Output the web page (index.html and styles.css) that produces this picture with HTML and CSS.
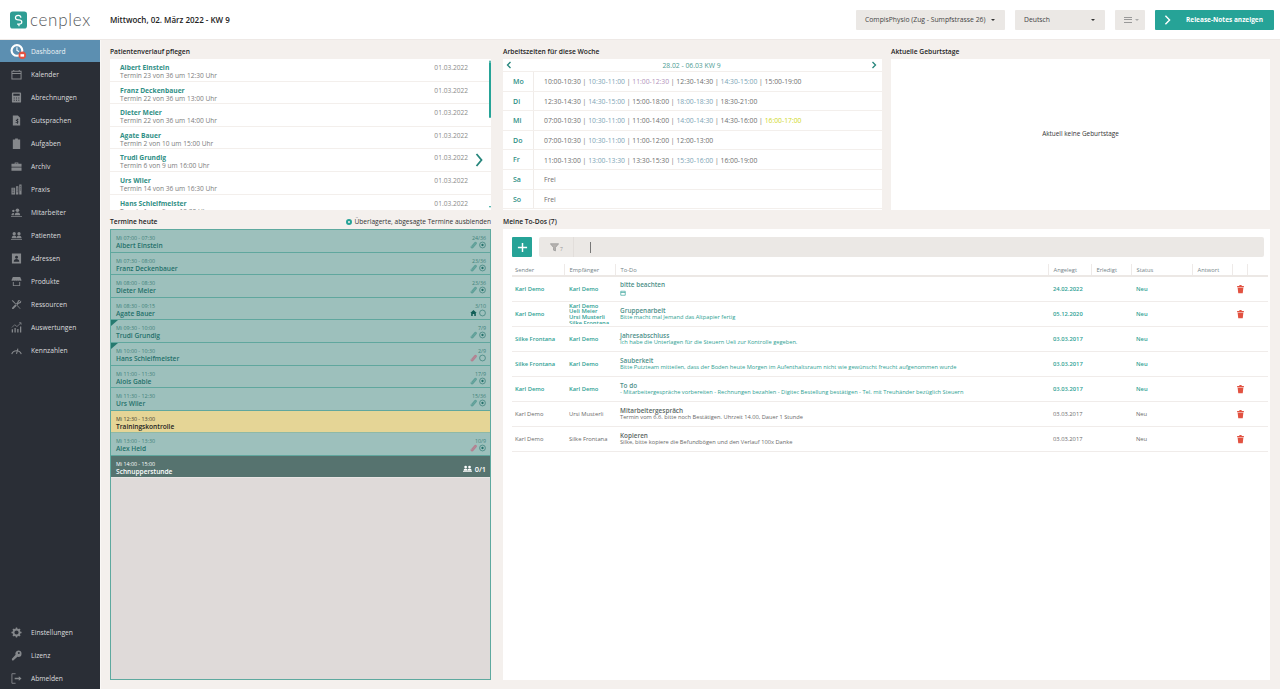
FILE: index.html
```html
<!DOCTYPE html>
<html>
<head>
<meta charset="utf-8">
<title>Cenplex Dashboard</title>
<link rel="stylesheet" href="styles.css">
</head>
<body>

<svg class="iconDefs" width="0" height="0">
	<symbol id="iCal" viewBox="0 0 12 12"><path d="M1 2.500h10v8.500H1zM3 1v2M9 1v2M1 5h10" fill="none" stroke="currentColor" stroke-width="1.100"/></symbol>
	<symbol id="iCalc" viewBox="0 0 12 12"><path d="M2 .5h8a1 1 0 0 1 1 1v9a1 1 0 0 1-1 1H2a1 1 0 0 1-1-1v-9a1 1 0 0 1 1-1zM2.500 2v2h7V2zM3 6v1h1V6zm2.500 0v1h1V6zM8 6v1h1V6zM3 8.500v1h1v-1zm2.500 0v1h1v-1zm2.500 0v1h1v-1z" fill="currentColor" fill-rule="evenodd"/></symbol>
	<symbol id="iDoc" viewBox="0 0 12 12"><path d="M2 .5h5.500L10 3v8.500H2zM6.500 4v1.200H5.300v1.300H6.500v1H5v1h1.500v1h1v-1c.8-.3.8-1.700 0-2H7.300v-1H8v-1h-.5V4z" fill="currentColor" fill-rule="evenodd"/></symbol>
	<symbol id="iClip" viewBox="0 0 12 12"><path d="M2 1.500h2.500V.5h3v1H10v10.500H2z" fill="currentColor"/></symbol>
	<symbol id="iCase" viewBox="0 0 12 12"><path d="M4 3V1.500h4V3h3.500v7.500H.5V3zm1 0h2v-.6H5zM.5 6.200h11v.8H.5z" fill="currentColor" fill-rule="evenodd"/></symbol>
	<symbol id="iHouse" viewBox="0 0 12 12"><path d="M.5 4h4v7.500h-4zM5.500 2.500h2.500v9H5.500zM9 .5h2.500v11H9z" fill="currentColor"/><path d="M1.500 5.500h2M1.500 7.500h2M1.500 9.500h2M6.200 4.500h1.200M6.200 6.500h1.200M6.200 8.500h1.200M9.700 2.500h1.200M9.700 4.500h1.200M9.700 6.500h1.200" stroke="#2a2e36" stroke-width=".7"/></symbol>
	<symbol id="iStaff" viewBox="0 0 12 12"><circle cx="7" cy="3.500" r="2" fill="currentColor"/><path d="M4 9c0-2 1-3 3-3s3 1 3 3zM2.500 5.500a1.300 1.300 0 1 1 .1 0zM.5 9c0-1.500.7-2.500 2-2.500l.7.100L3 9zM0 10h12v.8H0z" fill="currentColor"/></symbol>
	<symbol id="iPeople" viewBox="0 0 12 12"><circle cx="3.500" cy="4" r="1.800" fill="currentColor"/><circle cx="8.700" cy="4" r="1.800" fill="currentColor"/><path d="M.8 9c0-1.800 1-3 2.700-3s2.500 1.200 2.500 3zM6.200 9c0-1.800.8-3 2.500-3s2.800 1.200 2.800 3zM0 9.800h12v.8H0z" fill="currentColor"/></symbol>
	<symbol id="iBox" viewBox="0 0 12 12"><path d="M1 .5h10v11H1zM6 3a1.600 1.600 0 1 0 .1 0zM3 9.500h6c0-2-1-3-3-3s-3 1-3 3z" fill="currentColor" fill-rule="evenodd"/></symbol>
	<symbol id="iShop" viewBox="0 0 12 12"><path d="M2 1h8l1.500 3.500c0 1-2 1-2 0 0 1-2.300 1-2.300 0 0 1-2.400 1-2.400 0 0 1-2.300 1-2.300 0 0 1-2 1-2 0zM2 6.500h1V10h6V6.500h1V11H2z" fill="currentColor"/></symbol>
	<symbol id="iTools" viewBox="0 0 12 12"><path d="M1 1l1.500 1L10.500 10.500 10 11 2 3 1 2zM11 1.500L8.500 4 8 3.500 10 1.200C8.500.5 7 1.500 7.200 3.200L1.200 9.500c-.5 1 .5 2 1.400 1.300L8.700 4.800C10.500 5 11.500 3.500 11 1.500z" fill="currentColor"/></symbol>
	<symbol id="iChart" viewBox="0 0 12 12"><path d="M.8 8h1.400v3.500H.8zM3.800 6.500h1.400v5H3.800zM6.800 7.500h1.400v4H6.800zM9.800 5h1.400v6.500H9.800z" fill="currentColor"/><path d="M1 6l3-3 2.500 2L11 .8M8.800.8H11V3" fill="none" stroke="currentColor" stroke-width=".8"/></symbol>
	<symbol id="iGauge" viewBox="0 0 12 12"><path d="M.8 10A5.500 5.500 0 0 1 11.200 10M6 9.800L7.500 4" fill="none" stroke="currentColor" stroke-width="1.200"/></symbol>
	<symbol id="iGear" viewBox="0 0 12 12"><circle cx="6" cy="6" r="3.300" fill="none" stroke="currentColor" stroke-width="2"/><path d="M6 .5v2M6 9.500v2M.5 6h2M9.500 6h2M2.100 2.100l1.400 1.400M8.500 8.500l1.400 1.400M9.900 2.100L8.500 3.500M3.500 8.500l-1.400 1.400" stroke="currentColor" stroke-width="1.500"/></symbol>
	<symbol id="iKey" viewBox="0 0 12 12"><path d="M8 .5a3.500 3.500 0 0 1 0 7 3.500 3.500 0 0 1-1-.2L2.500 11.500h-1l-.5-.5v-1.500L5 5.300A3.500 3.500 0 0 1 8 .5zm.5 1.700a1 1 0 1 0 .1 0z" fill="currentColor" fill-rule="evenodd"/></symbol>
	<symbol id="iExit" viewBox="0 0 12 12"><path d="M5 .8H1v10.400h4" fill="none" stroke="currentColor" stroke-width="1"/><path d="M4 5.300h4.500V3.500L11.500 6l-3 2.500V6.700H4z" fill="currentColor"/></symbol>
	<symbol id="iPaper" viewBox="0 0 12 12"><path d="M3 8.500L8.200 2.300c1-1.200 3-.2 2.200 1.400L5 10c-1.200 1.500-3.500.5-2.800-1.500" fill="none" stroke="currentColor" stroke-width="2.400"/></symbol>
	<symbol id="iDot" viewBox="0 0 12 12"><circle cx="6" cy="6" r="5" fill="none" stroke="currentColor" stroke-width="1"/><circle cx="6" cy="6" r="2" fill="currentColor"/></symbol>
	<symbol id="iRing" viewBox="0 0 12 12"><circle cx="6" cy="6" r="5" fill="none" stroke="currentColor" stroke-width="1"/></symbol>
	<symbol id="iHome" viewBox="0 0 12 12"><path d="M6 1l5.500 5H10v5H7.300V7.500H4.700V11H2V6H.5z" fill="currentColor"/></symbol>
	<symbol id="iTrash" viewBox="0 0 12 12"><path d="M1.500 2h3V.8h3V2h3v1.500h-9zM2.200 4.300h7.600L9 11.500H3z" fill="currentColor"/></symbol>
</svg>

<div class="topBar">
	<div class="logoBox">
		<svg class="logoMark" viewBox="0 0 18 18"><rect width="18" height="18" rx="3" fill="#2f9d94"/><path d="M11.500 6.500C11.500 4.800 10.300 4 8.800 4 7 4 5.800 5 5.800 6.500S7 8.800 8.800 8.800 12.500 9.500 12.500 11 11 13.300 9.300 13.300H7.500M9.500 13v2.500" fill="none" stroke="#fff" stroke-width="1.300"/></svg>
		<span class="logoText">cenplex</span>
	</div>
	<div class="dateText">Mittwoch, 02. März 2022 - KW 9</div>
	<div class="topActions">
		<div class="selectBox selectPractice">CompisPhysio (Zug - Sumpfstrasse 26)<span class="caret"></span></div>
		<div class="selectBox selectLang">Deutsch<span class="caret"></span></div>
		<div class="selectBox selectMenu"><span class="burger"></span><span class="caret caretLight"></span></div>
		<div class="releaseBtn">
			<svg class="releaseArrow" viewBox="0 0 8 12"><path d="M1.500 1l5 5-5 5" fill="none" stroke="#fff" stroke-width="1.700"/></svg>
			<span>Release-Notes anzeigen</span>
		</div>
	</div>
</div>

<div class="pageBody">

	<div class="sideBar">
		<div class="navItem navActive">
			<svg class="navIcon dashIcon" viewBox="0 0 14 14"><circle cx="6" cy="6" r="5" fill="none" stroke="#fff" stroke-width="2"/><path d="M6 3v3l2 1" fill="none" stroke="#fff" stroke-width="1"/><circle cx="11" cy="10.500" r="3.500" fill="#e25241"/><rect x="9.300" y="9.500" width="3.400" height="2.300" fill="#fff"/></svg>
			Dashboard
		</div>
		<div class="navItem"><svg class="navIcon"><use href="#iCal"/></svg>Kalender</div>
		<div class="navItem"><svg class="navIcon"><use href="#iCalc"/></svg>Abrechnungen</div>
		<div class="navItem"><svg class="navIcon"><use href="#iDoc"/></svg>Gutsprachen</div>
		<div class="navItem"><svg class="navIcon"><use href="#iClip"/></svg>Aufgaben</div>
		<div class="navItem"><svg class="navIcon"><use href="#iCase"/></svg>Archiv</div>
		<div class="navItem"><svg class="navIcon"><use href="#iHouse"/></svg>Praxis</div>
		<div class="navItem"><svg class="navIcon"><use href="#iStaff"/></svg>Mitarbeiter</div>
		<div class="navItem"><svg class="navIcon"><use href="#iPeople"/></svg>Patienten</div>
		<div class="navItem"><svg class="navIcon"><use href="#iBox"/></svg>Adressen</div>
		<div class="navItem"><svg class="navIcon"><use href="#iShop"/></svg>Produkte</div>
		<div class="navItem"><svg class="navIcon"><use href="#iTools"/></svg>Ressourcen</div>
		<div class="navItem"><svg class="navIcon"><use href="#iChart"/></svg>Auswertungen</div>
		<div class="navItem"><svg class="navIcon"><use href="#iGauge"/></svg>Kennzahlen</div>
		<div class="navSpacer"></div>
		<div class="navItem"><svg class="navIcon"><use href="#iGear"/></svg>Einstellungen</div>
		<div class="navItem"><svg class="navIcon"><use href="#iKey"/></svg>Lizenz</div>
		<div class="navItem"><svg class="navIcon"><use href="#iExit"/></svg>Abmelden</div>
	</div>

	<div class="mainArea">

		<div class="topRow">
			<div class="panelCol colLeft">
				<div class="panelTitle">Patientenverlauf pflegen</div>
				<div class="panelBox historyBox">
					<div class="historyRow"><div><div class="histName">Albert Einstein</div><div class="histSub">Termin 23 von 36 um 12:30 Uhr</div></div><div class="histDate">01.03.2022</div></div>
					<div class="historyRow"><div><div class="histName">Franz Deckenbauer</div><div class="histSub">Termin 22 von 36 um 13:00 Uhr</div></div><div class="histDate">01.03.2022</div></div>
					<div class="historyRow"><div><div class="histName">Dieter Meier</div><div class="histSub">Termin 22 von 36 um 14:00 Uhr</div></div><div class="histDate">01.03.2022</div></div>
					<div class="historyRow"><div><div class="histName">Agate Bauer</div><div class="histSub">Termin 2 von 10 um 15:00 Uhr</div></div><div class="histDate">01.03.2022</div></div>
					<div class="historyRow"><div><div class="histName">Trudi Grundig</div><div class="histSub">Termin 6 von 9 um 16:00 Uhr</div></div><div class="histDate">01.03.2022</div></div>
					<div class="historyRow"><div><div class="histName">Urs Wiler</div><div class="histSub">Termin 14 von 36 um 16:30 Uhr</div></div><div class="histDate">01.03.2022</div></div>
					<div class="historyRow"><div><div class="histName">Hans Schleifmeister</div><div class="histSub">Termin 1 von 9 um 18:30 Uhr</div></div><div class="histDate">01.03.2022</div></div>
					<svg class="histChevron" viewBox="0 0 8 14"><path d="M1.500 1l5 6-5 6" fill="none" stroke="#25857b" stroke-width="1.800"/></svg>
					<div class="scrollThumb"></div>
					<div class="scrollUp"></div>
					<div class="scrollDown"></div>
				</div>
			</div>

			<div class="panelCol colMid">
				<div class="panelTitle">Arbeitszeiten für diese Woche</div>
				<div class="panelBox weekBox">
					<div class="weekHead">
						<svg class="weekArrow" viewBox="0 0 6 8"><path d="M4.500 1L1.500 4l3 3" fill="none" stroke="#25857b" stroke-width="1.300"/></svg>
						<span>28.02 - 06.03 KW 9</span>
						<svg class="weekArrow" viewBox="0 0 6 8"><path d="M1.500 1l3 3-3 3" fill="none" stroke="#25857b" stroke-width="1.300"/></svg>
					</div>
					<div class="weekRow"><div class="weekDay">Mo</div><div class="weekTimes">10:00-10:30 | <span class="tBlue">10:30-11:00</span> | <span class="tPurple">11:00-12:30</span> | 12:30-14:30 | <span class="tBlue">14:30-15:00</span> | 15:00-19:00</div></div>
					<div class="weekRow"><div class="weekDay">Di</div><div class="weekTimes">12:30-14:30 | <span class="tBlue">14:30-15:00</span> | 15:00-18:00 | <span class="tBlue">18:00-18:30</span> | 18:30-21:00</div></div>
					<div class="weekRow"><div class="weekDay">Mi</div><div class="weekTimes">07:00-10:30 | <span class="tBlue">10:30-11:00</span> | 11:00-14:00 | <span class="tBlue">14:00-14:30</span> | 14:30-16:00 | <span class="tYellow">16:00-17:00</span></div></div>
					<div class="weekRow"><div class="weekDay">Do</div><div class="weekTimes">07:00-10:30 | <span class="tBlue">10:30-11:00</span> | 11:00-12:00 | 12:00-13:00</div></div>
					<div class="weekRow"><div class="weekDay">Fr</div><div class="weekTimes">11:00-13:00 | <span class="tBlue">13:00-13:30</span> | 13:30-15:30 | <span class="tBlue">15:30-16:00</span> | 16:00-19:00</div></div>
					<div class="weekRow"><div class="weekDay">Sa</div><div class="weekTimes">Frei</div></div>
					<div class="weekRow"><div class="weekDay">So</div><div class="weekTimes">Frei</div></div>
				</div>
			</div>

			<div class="panelCol colRight">
				<div class="panelTitle">Aktuelle Geburtstage</div>
				<div class="panelBox birthdayBox">Aktuell keine Geburtstage</div>
			</div>
		</div>

		<div class="bottomRow">
			<div class="panelCol colLeft">
				<div class="panelTitle titleSplit">
					<span>Termine heute</span>
					<span class="hideToggle"><span class="toggleDot"></span>Überlagerte, abgesagte Termine ausblenden</span>
				</div>
				<div class="apptBox">
					<div class="appt"><div><div class="apptTime">Mi 07:00 - 07:30</div><div class="apptName">Albert Einstein</div></div><div class="apptMeta"><div class="apptCount">24/36</div><div class="apptIcons"><svg class="clipGreen"><use href="#iPaper"/></svg><svg><use href="#iDot"/></svg></div></div></div>
					<div class="appt"><div><div class="apptTime">Mi 07:30 - 08:00</div><div class="apptName">Franz Deckenbauer</div></div><div class="apptMeta"><div class="apptCount">23/36</div><div class="apptIcons"><svg class="clipGreen"><use href="#iPaper"/></svg><svg><use href="#iDot"/></svg></div></div></div>
					<div class="appt"><div><div class="apptTime">Mi 08:00 - 08:30</div><div class="apptName">Dieter Meier</div></div><div class="apptMeta"><div class="apptCount">23/36</div><div class="apptIcons"><svg class="clipGreen"><use href="#iPaper"/></svg><svg><use href="#iDot"/></svg></div></div></div>
					<div class="appt"><div><div class="apptTime">Mi 08:30 - 09:15</div><div class="apptName">Agate Bauer</div></div><div class="apptMeta"><div class="apptCount">3/10</div><div class="apptIcons"><svg class="homeDark"><use href="#iHome"/></svg><svg><use href="#iRing"/></svg></div></div></div>
					<div class="appt apptFlag"><div><div class="apptTime">Mi 09:30 - 10:00</div><div class="apptName">Trudi Grundig</div></div><div class="apptMeta"><div class="apptCount">7/9</div><div class="apptIcons"><svg class="clipGreen"><use href="#iPaper"/></svg><svg><use href="#iDot"/></svg></div></div></div>
					<div class="appt apptFlag"><div><div class="apptTime">Mi 10:00 - 10:30</div><div class="apptName">Hans Schleifmeister</div></div><div class="apptMeta"><div class="apptCount">2/9</div><div class="apptIcons"><svg class="clipPink"><use href="#iPaper"/></svg><svg><use href="#iRing"/></svg></div></div></div>
					<div class="appt"><div><div class="apptTime">Mi 11:00 - 11:30</div><div class="apptName">Alois Gable</div></div><div class="apptMeta"><div class="apptCount">17/9</div><div class="apptIcons"><svg class="clipGreen"><use href="#iPaper"/></svg><svg><use href="#iDot"/></svg></div></div></div>
					<div class="appt"><div><div class="apptTime">Mi 11:30 - 12:30</div><div class="apptName">Urs Wiler</div></div><div class="apptMeta"><div class="apptCount">15/36</div><div class="apptIcons"><svg class="clipGreen"><use href="#iPaper"/></svg><svg><use href="#iDot"/></svg></div></div></div>
					<div class="appt apptYellow"><div><div class="apptTime">Mi 12:30 - 13:00</div><div class="apptName">Trainingskontrolle</div></div></div>
					<div class="appt"><div><div class="apptTime">Mi 13:00 - 13:30</div><div class="apptName">Alex Held</div></div><div class="apptMeta"><div class="apptCount">10/9</div><div class="apptIcons"><svg class="clipPink"><use href="#iPaper"/></svg><svg><use href="#iDot"/></svg></div></div></div>
					<div class="appt apptDark"><div><div class="apptTime">Mi 14:00 - 15:00</div><div class="apptName">Schnupperstunde</div></div><div class="groupCount"><svg><use href="#iPeople"/></svg>0/1</div></div>
				</div>
			</div>

			<div class="panelCol colWide">
				<div class="panelTitle">Meine To-Dos (7)</div>
				<div class="panelBox todoBox">
					<div class="todoBar">
						<div class="addBtn"><svg viewBox="0 0 12 12"><path d="M6 1v10M1 6h10" stroke="#fff" stroke-width="1.600"/></svg></div>
						<div class="searchBar">
							<div class="filterCell">
								<svg viewBox="0 0 12 12"><path d="M.5 1h11L7.300 6v4.500l-2.600-1V6z" fill="#b5b2af" stroke="#999" stroke-width="1"/></svg>
								<span>7</span>
							</div>
							<div class="searchCursor"></div>
						</div>
					</div>
					<table class="todoTable">
						<colgroup>
							<col class="cSender"><col class="cTo"><col class="cTask"><col class="cDate"><col class="cDone"><col class="cStatus"><col class="cReply"><col class="cDel"><col class="cEnd">
						</colgroup>
						<thead>
							<tr><th>Sender</th><th>Empfänger</th><th>To-Do</th><th>Angelegt</th><th>Erledigt</th><th>Status</th><th>Antwort</th><th></th><th></th></tr>
						</thead>
						<tbody>
							<tr class="rowNew">
								<td class="strong">Karl Demo</td><td class="strong">Karl Demo</td>
								<td><div class="taskTitle">bitte beachten</div><svg class="taskCal" viewBox="0 0 12 12"><path d="M1.500 2.500h9v8h-9zM1.500 5h9" fill="none" stroke="currentColor" stroke-width="1.300"/></svg></td>
								<td class="strong">24.02.2022</td><td></td><td class="strong">Neu</td><td></td><td><svg class="trash"><use href="#iTrash"/></svg></td><td></td>
							</tr>
							<tr class="rowNew">
								<td class="strong">Karl Demo</td>
								<td class="strong"><div class="multiTo">Karl Demo<br>Ueli Meier<br>Ursi Musterli<br>Silke Frontana</div></td>
								<td><div class="taskTitle">Gruppenarbeit</div><div class="taskText">Bitte macht mal Jemand das Altpapier fertig</div></td>
								<td class="strong">05.12.2020</td><td></td><td class="strong">Neu</td><td></td><td><svg class="trash"><use href="#iTrash"/></svg></td><td></td>
							</tr>
							<tr class="rowNew">
								<td class="strong">Silke Frontana</td><td class="strong">Karl Demo</td>
								<td><div class="taskTitle">Jahresabschluss</div><div class="taskText">Ich habe die Unterlagen für die Steuern Ueli zur Kontrolle gegeben.</div></td>
								<td class="strong">03.03.2017</td><td></td><td class="strong">Neu</td><td></td><td></td><td></td>
							</tr>
							<tr class="rowNew">
								<td class="strong">Silke Frontana</td><td class="strong">Karl Demo</td>
								<td><div class="taskTitle">Sauberkeit</div><div class="taskText">Bitte Putzteam mitteilen, dass der Boden heute Morgen im Aufenthaltsraum nicht wie gewünscht freucht aufgenommen wurde</div></td>
								<td class="strong">03.03.2017</td><td></td><td class="strong">Neu</td><td></td><td></td><td></td>
							</tr>
							<tr class="rowNew">
								<td class="strong">Karl Demo</td><td class="strong">Karl Demo</td>
								<td><div class="taskTitle">To do</div><div class="taskText">- Mitarbeitergespräche vorbereiten - Rechnungen bezahlen - Digitec Bestellung bestätigen - Tel. mit Treuhänder bezüglich Steuern</div></td>
								<td class="strong">03.03.2017</td><td></td><td class="strong">Neu</td><td></td><td><svg class="trash"><use href="#iTrash"/></svg></td><td></td>
							</tr>
							<tr>
								<td>Karl Demo</td><td>Ursi Musterli</td>
								<td><div class="taskTitle">Mitarbeitergespräch</div><div class="taskText">Termin vom 6.6. bitte noch Bestätigen. Uhrzeit 14.00, Dauer 1 Stunde</div></td>
								<td>03.03.2017</td><td></td><td>Neu</td><td></td><td><svg class="trash"><use href="#iTrash"/></svg></td><td></td>
							</tr>
							<tr>
								<td>Karl Demo</td><td>Silke Frontana</td>
								<td><div class="taskTitle">Kopieren</div><div class="taskText">Silke, bitte kopiere die Befundbögen und den Verlauf 100x  Danke</div></td>
								<td>03.03.2017</td><td></td><td>Neu</td><td></td><td><svg class="trash"><use href="#iTrash"/></svg></td><td></td>
							</tr>
						</tbody>
					</table>
				</div>
			</div>
		</div>

	</div>
</div>

</body>
</html>
```

FILE: styles.css
```css
* {
	box-sizing: border-box;
}

html, body {
	height: 100%;
}

body {
	margin: 0;
	overflow: hidden;
	background: #f4f0ed;
	color: #222;
	font-family: "Open Sans", "Noto Sans", sans-serif;
	font-size: 7px;
}

.iconDefs {
	display: block;
	height: 0;
}

/* top bar */

.topBar {
	display: flex;
	align-items: center;
	height: 40px;
	background: #fff;
	border-bottom: 1px solid #eee9e6;
}

.logoBox {
	display: flex;
	align-items: center;
	width: 110px;
	padding-left: 10px;
	gap: 3px;
}

.logoMark {
	width: 17px;
	height: 18px;
}

.logoText {
	font-family: "Lato", sans-serif;
	font-weight: 300;
	font-size: 17px;
	letter-spacing: 0.7px;
	color: #55585b;
	line-height: 18px;
}

.dateText {
	font-size: 8px;
	font-weight: 600;
	color: #222;
}

.topActions {
	display: flex;
	margin-left: auto;
	padding-right: 6px;
	gap: 10px;
}

.selectBox {
	display: flex;
	align-items: center;
	justify-content: space-between;
	height: 20px;
	padding: 0 10px 0 9px;
	background: #ebe8e5;
	border-radius: 1px;
	font-size: 6.8px;
	color: #444;
	white-space: nowrap;
}

.selectPractice {
	width: 149px;
}

.selectLang {
	width: 90px;
}

.selectMenu {
	width: 30px;
	padding: 0 6px 0 9px;
}

.caret {
	width: 0;
	height: 0;
	border-left: 2px solid transparent;
	border-right: 2px solid transparent;
	border-top: 2px solid #333;
}

.caretLight {
	border-top-color: #aaa;
}

.burger {
	width: 8px;
	height: 6px;
	border-top: 1px solid #999;
	border-bottom: 1px solid #999;
	position: relative;
}

.burger::after {
	content: "";
	position: absolute;
	left: 0;
	right: 0;
	top: 1.5px;
	height: 1px;
	background: #999;
}

.releaseBtn {
	display: flex;
	align-items: center;
	width: 119px;
	height: 20px;
	padding-left: 9px;
	background: #26a397;
	border-radius: 1px;
	color: #fff;
	font-size: 6.5px;
	font-weight: 700;
	white-space: nowrap;
}

.releaseArrow {
	width: 7px;
	height: 10px;
	margin-right: 15px;
}

/* layout */

.pageBody {
	display: flex;
	height: 649px;
}

.sideBar {
	display: flex;
	flex-direction: column;
	width: 100px;
	background: #2a2e36;
	flex-shrink: 0;
}

.navItem {
	display: flex;
	align-items: center;
	height: 23px;
	padding: 1px 0 0 11px;
	color: #dcdddf;
	font-size: 6.7px;
	flex-shrink: 0;
}

.navActive {
	background: #5c8fb1;
	height: 22px;
	padding-top: 0;
	color: #eef3f6;
}

.navIcon {
	width: 11px;
	height: 11px;
	margin-right: 9px;
	color: #85888c;
}

.dashIcon {
	width: 16px;
	height: 15px;
	margin-left: -1px;
	margin-right: 5px;
}

.navSpacer {
	flex: 1;
}

.mainArea {
	flex: 1;
	display: flex;
	flex-direction: column;
	padding: 7px 10px 9px 9px;
	min-width: 0;
	border-left: 1px solid #faf8f6;
}

.topRow {
	display: flex;
	height: 163px;
	gap: 9px;
}

.bottomRow {
	display: flex;
	flex: 1;
	gap: 12px;
	margin-top: 7px;
	min-height: 0;
}

.panelCol {
	display: flex;
	flex-direction: column;
	min-width: 0;
}

.colLeft {
	width: 381px;
	flex-shrink: 0;
}

.topRow .colLeft {
	margin-right: 3px;
}

.colMid,
.colRight,
.colWide {
	flex: 1;
}

.panelTitle {
	height: 12px;
	line-height: 9px;
	font-size: 6.7px;
	font-weight: 600;
	color: #1e1e1e;
}

.titleSplit {
	display: flex;
	justify-content: space-between;
}

.panelBox {
	flex: 1;
	background: #fff;
	min-height: 0;
	position: relative;
	overflow: hidden;
}

/* patient history */

.historyRow {
	display: flex;
	justify-content: space-between;
	height: 22.6px;
	padding: 5px 23px 0 10px;
	border-bottom: 1px solid #f3efec;
}

.histName {
	font-size: 6.7px;
	line-height: 8px;
	font-weight: 700;
	color: #2f8f85;
}

.histSub {
	font-size: 6.6px;
	line-height: 8px;
	color: #7c7c7c;
}

.histDate {
	font-size: 6.6px;
	line-height: 8px;
	color: #8a8a8a;
}

.histChevron {
	position: absolute;
	left: 365px;
	top: 94px;
	width: 8px;
	height: 14px;
}

.scrollThumb {
	position: absolute;
	right: 0;
	top: 3px;
	width: 2.5px;
	height: 56px;
	background: #26a397;
	border-radius: 1px;
}

.scrollUp,
.scrollDown {
	position: absolute;
	right: 0;
	width: 0;
	height: 0;
	border-left: 1.5px solid transparent;
	border-right: 1.5px solid transparent;
}

.scrollUp {
	top: 1px;
	border-bottom: 2px solid #26a397;
}

.scrollDown {
	bottom: 2px;
	border-top: 2px solid #26a397;
}

/* working hours */

.weekHead {
	display: flex;
	justify-content: space-between;
	align-items: center;
	height: 13px;
	padding: 0 5px 0 3px;
	color: #4e9c94;
	font-size: 6.8px;
	border-bottom: 1px solid #f3efec;
}

.weekArrow {
	width: 6px;
	height: 8px;
}

.weekRow {
	display: flex;
	align-items: center;
	height: 19.6px;
	border-bottom: 1px solid #f3efec;
}

.weekDay {
	width: 31px;
	height: 100%;
	padding: 1px 0 0 10px;
	line-height: 18px;
	font-size: 7px;
	font-weight: 600;
	color: #2f8f85;
	border-right: 1px solid #f0ece9;
}

.weekTimes {
	padding: 1px 0 0 10px;
	font-size: 6.8px;
	color: #6f6f6f;
}

.tBlue {
	color: #7da4b5;
}

.tPurple {
	color: #b294bb;
}

.tYellow {
	color: #cfd81f;
}

.birthdayBox {
	display: flex;
	align-items: center;
	justify-content: center;
	padding-bottom: 3px;
	font-size: 6.4px;
	color: #333;
}

/* today's appointments */

.hideToggle {
	display: flex;
	align-items: center;
	height: 9px;
	font-weight: 400;
	font-size: 6.6px;
	color: #333;
	gap: 3px;
}

.toggleDot {
	width: 6px;
	height: 6px;
	border: 2px solid #26a397;
	border-radius: 50%;
}

.apptBox {
	flex: 1;
	background: #dfdad9;
	border: 1px solid #5ea99f;
	min-height: 0;
}

.appt {
	display: flex;
	justify-content: space-between;
	height: 22.6px;
	padding: 5px 4px 0 5px;
	background: #9dc0bc;
	border-bottom: 1px solid #60a79e;
	position: relative;
}

.apptFlag::before {
	content: "";
	position: absolute;
	left: 0;
	top: 0;
	border-top: 6px solid #26796f;
	border-right: 7px solid transparent;
}

.apptTime {
	font-size: 5.3px;
	line-height: 7px;
	color: #3d827a;
}

.apptName {
	font-size: 6.6px;
	line-height: 8px;
	font-weight: 600;
	color: #24706a;
}

.apptMeta {
	text-align: right;
}

.apptCount {
	font-size: 5.3px;
	line-height: 6px;
	color: #3d827a;
}

.apptIcons {
	display: flex;
	justify-content: flex-end;
	gap: 2px;
	color: #24706a;
}

.apptIcons svg {
	width: 7px;
	height: 8px;
}

.clipGreen {
	color: #5f9f98;
}

.clipPink {
	color: #b47f90;
}

.homeDark {
	color: #125f58;
}

.apptYellow {
	background: #e5d596;
	border-bottom-color: #8fb9a6;
}

.apptYellow .apptTime {
	color: #3c3c2e;
}

.apptYellow .apptName {
	color: #1e1e1e;
}

.apptDark {
	height: 22.5px;
	background: #56736f;
	border-bottom-color: #e9e5e4;
	align-items: flex-start;
}

.apptDark .apptTime,
.apptDark .apptName {
	color: #fff;
}

.groupCount {
	display: flex;
	align-items: center;
	gap: 2px;
	margin-top: 3px;
	color: #fff;
	font-size: 7.4px;
	font-weight: 600;
}

.groupCount svg {
	width: 11px;
	height: 9px;
}

/* todos */

.todoBox {
	padding: 8px 6px 0 9px;
}

.todoBar {
	display: flex;
	height: 20px;
	gap: 7px;
}

.addBtn {
	display: flex;
	align-items: center;
	justify-content: center;
	width: 20px;
	height: 20px;
	background: #26a397;
	border-radius: 1px;
}

.addBtn svg {
	width: 11px;
	height: 11px;
}

.searchBar {
	flex: 1;
	display: flex;
	align-items: center;
	background: #ebe8e5;
	border-radius: 2px;
}

.filterCell {
	display: flex;
	align-items: flex-end;
	gap: 1px;
	width: 35px;
	height: 100%;
	padding: 0 0 5px 11px;
	border-right: 1px solid #e2dedb;
	font-size: 5px;
	color: #999;
}

.filterCell svg {
	width: 9px;
	height: 9px;
}

.searchCursor {
	width: 1px;
	height: 11px;
	margin-left: 16px;
	background: #777;
}

.todoTable {
	width: 756px;
	margin-top: 7px;
	border-collapse: collapse;
	table-layout: fixed;
	font-size: 5.8px;
	color: #6a6a6a;
}

.cSender { width: 52px; }
.cTo { width: 51px; }
.cTask { width: 433px; }
.cDate { width: 43px; }
.cDone { width: 40px; }
.cStatus { width: 61px; }
.cReply { width: 40px; }
.cDel { width: 15px; }
.cEnd { width: 21px; }

.todoTable th {
	height: 12px;
	padding: 0 0 0 5px;
	text-align: left;
	font-weight: 400;
	color: #748488;
	border-right: 1px solid #eeeae8;
	border-bottom: 2px solid #ece8e5;
}

.todoTable th:first-child {
	padding-left: 3px;
}

.todoTable th:last-child {
	border-right: 0;
}

.todoTable td {
	height: 25.1px;
	padding: 0 0 0 5px;
	border-bottom: 1px solid #f0ecea;
	white-space: nowrap;
	overflow: hidden;
}

.todoTable td:first-child {
	padding-left: 3px;
}

.rowNew td {
	color: #2f9f94;
}

.rowNew td.strong {
	font-weight: 600;
}

.multiTo {
	height: 20px;
	line-height: 5.8px;
	overflow: hidden;
}

.taskTitle {
	font-size: 6.4px;
	line-height: 7px;
	font-weight: 600;
	color: #5a6663;
}

.rowNew .taskTitle {
	color: #4d8f89;
}

.taskText {
	font-size: 5.7px;
	line-height: 7px;
	font-weight: 400;
}

.taskCal {
	display: block;
	width: 6px;
	height: 6px;
	margin-top: 2px;
	color: #2f9f94;
}

.trash {
	display: block;
	width: 9px;
	height: 10px;
	margin-left: -1px;
	color: #e25241;
}
```
